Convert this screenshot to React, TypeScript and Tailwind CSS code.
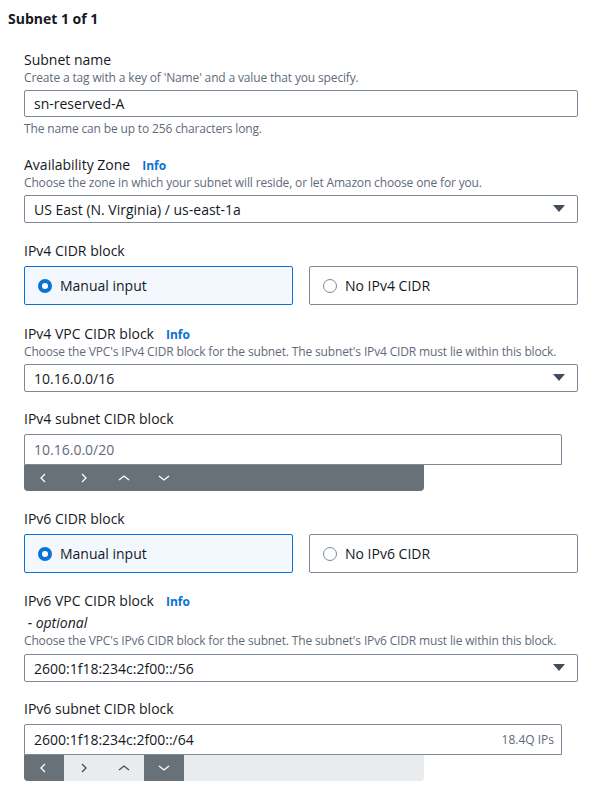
import { ReactNode } from 'react';

// --- small pieces ---
function Info() {
  return <span className="ml-3 text-[12px] font-bold text-[#0972d3]">Info</span>;
}

function Label({ children, info }: { children: ReactNode; info?: boolean }) {
  return (
    <div className="flex items-baseline h-5 leading-5 text-[14px] text-[#16191f]">
      <span>{children}</span>
      {info && <Info />}
    </div>
  );
}

function Desc({ children }: { children: ReactNode }) {
  return <div className="h-4 text-[12px] leading-4 tracking-[-0.15px] text-[#5f6b7a]">{children}</div>;
}

function Caret() {
  return (
    <svg width="12" height="8" viewBox="0 0 12 8" className="mr-[4px]">
      <polygon points="0,0 12,0 6,7" fill="#414d5c" />
    </svg>
  );
}

function Select({ value }: { value: string }) {
  return (
    <div className="flex items-center justify-between h-[28px] border border-[#7d8998] rounded-[2px] pl-[9px] pr-[8px] text-[14px] text-[#16191f]">
      <span>{value}</span>
      <Caret />
    </div>
  );
}

function Radio({ checked }: { checked: boolean }) {
  return checked ? (
    <span className="w-[14px] h-[14px] rounded-full border-[4px] border-[#0972d3] bg-white" />
  ) : (
    <span className="w-[14px] h-[14px] rounded-full border border-[#7d8998] bg-white" />
  );
}

function Tiles({ second }: { second: string }) {
  return (
    <div className="grid grid-cols-2 gap-4 mt-[5px]">
      <div className="flex items-center h-[39px] border border-[#0972d3] rounded-[2px] bg-[#f2f8fd] pl-[13px] gap-[8px] text-[14px] text-[#16191f]">
        <Radio checked />
        <span>Manual input</span>
      </div>
      <div className="flex items-center h-[39px] border border-[#7d8998] rounded-[2px] bg-white pl-[13px] gap-[8px] text-[14px] text-[#16191f]">
        <Radio checked={false} />
        <span>{second}</span>
      </div>
    </div>
  );
}

function Chevron({ dir, color }: { dir: 'left' | 'right' | 'up' | 'down'; color: string }) {
  const pts = {
    left: '7,2 3,6 7,10',
    right: '4,2 8,6 4,10',
    up: '1,8 6,4 11,8',
    down: '1,4 6,8 11,4',
  }[dir];
  return (
    <svg width="12" height="12" viewBox="0 0 12 12">
      <polyline points={pts} fill="none" stroke={color} strokeWidth="1.3" />
    </svg>
  );
}

function Toolbar({ light }: { light?: boolean }) {
  const dirs: ('left' | 'right' | 'up' | 'down')[] = ['left', 'right', 'up', 'down'];
  return (
    <div className={`flex w-[400px] h-[26px] rounded-b-[4px] overflow-hidden ${light ? 'bg-[#e9ebed]' : 'bg-[#687078]'}`}>
      {dirs.map((d, i) => {
        const dark = !light || i === 0 || i === 3;
        return (
          <div key={d} className={`w-10 h-full flex items-center justify-center ${light && dark ? 'bg-[#687078]' : ''}`}>
            <Chevron dir={d} color={dark ? '#ffffff' : '#414d5c'} />
          </div>
        );
      })}
    </div>
  );
}

// ===================================================================
// ==                          MAIN PAGE                            ==
// ===================================================================
export default function App() {
  return (
    <div className="w-[589px] h-[786px] bg-white overflow-hidden font-['Open_Sans',sans-serif]">
      <div className="pl-2 pt-[9px] h-5 text-[14px] leading-5 font-bold text-[#16191f]">Subnet 1 of 1</div>

      <div className="pl-6 pr-[11px] pt-[30px]">
        {/* Subnet name */}
        <Label>Subnet name</Label>
        <Desc>Create a tag with a key of 'Name' and a value that you specify.</Desc>
        <div className="mt-[4px] flex items-center h-[27px] border border-[#7d8998] rounded-[2px] pl-[9px] text-[14px] text-[#16191f]">
          sn-reserved-A
        </div>
        <div className="mt-[4px] h-4 text-[12px] leading-4 tracking-[-0.15px] text-[#5f6b7a]">The name can be up to 256 characters long.</div>

        {/* Availability Zone */}
        <div className="mt-[18px]">
          <Label info>Availability Zone</Label>
          <Desc>Choose the zone in which your subnet will reside, or let Amazon choose one for you.</Desc>
          <div className="mt-[4px]">
            <Select value="US East (N. Virginia) / us-east-1a" />
          </div>
        </div>

        {/* IPv4 CIDR */}
        <div className="mt-[18px]">
          <Label>IPv4 CIDR block</Label>
          <Tiles second="No IPv4 CIDR" />
        </div>

        <div className="mt-[19px]">
          <Label info>IPv4 VPC CIDR block</Label>
          <Desc>Choose the VPC's IPv4 CIDR block for the subnet. The subnet's IPv4 CIDR must lie within this block.</Desc>
          <div className="mt-[4px]">
            <Select value="10.16.0.0/16" />
          </div>
        </div>

        <div className="mt-[17px]">
          <Label>IPv4 subnet CIDR block</Label>
          <div className="mt-[5px] w-[538px] flex items-center h-[31px] border border-[#7d8998] rounded-t-[2px] pl-[9px] text-[14px] text-[#5f6b7a]">
            10.16.0.0/20
          </div>
          <Toolbar />
        </div>

        {/* IPv6 CIDR */}
        <div className="mt-[18px]">
          <Label>IPv6 CIDR block</Label>
          <Tiles second="No IPv6 CIDR" />
        </div>

        <div className="mt-[18px]">
          <Label info>IPv6 VPC CIDR block</Label>
          <div className="mt-[2px] h-[20px] text-[14px] leading-5 italic text-[#16191f]">&nbsp;- optional</div>
          <Desc>Choose the VPC's IPv6 CIDR block for the subnet. The subnet's IPv6 CIDR must lie within this block.</Desc>
          <div className="mt-[5px]">
            <Select value="2600:1f18:234c:2f00::/56" />
          </div>
        </div>

        <div className="mt-[17px]">
          <Label>IPv6 subnet CIDR block</Label>
          <div className="mt-[5px] w-[538px] flex items-center justify-between h-[31px] border border-[#7d8998] rounded-t-[2px] pl-[9px] pr-[7px] text-[14px] text-[#16191f]">
            <span>2600:1f18:234c:2f00::/64</span>
            <span className="text-[12px] text-[#5f6b7a]">18.4Q IPs</span>
          </div>
          <Toolbar light />
        </div>
      </div>
    </div>
  );
}
